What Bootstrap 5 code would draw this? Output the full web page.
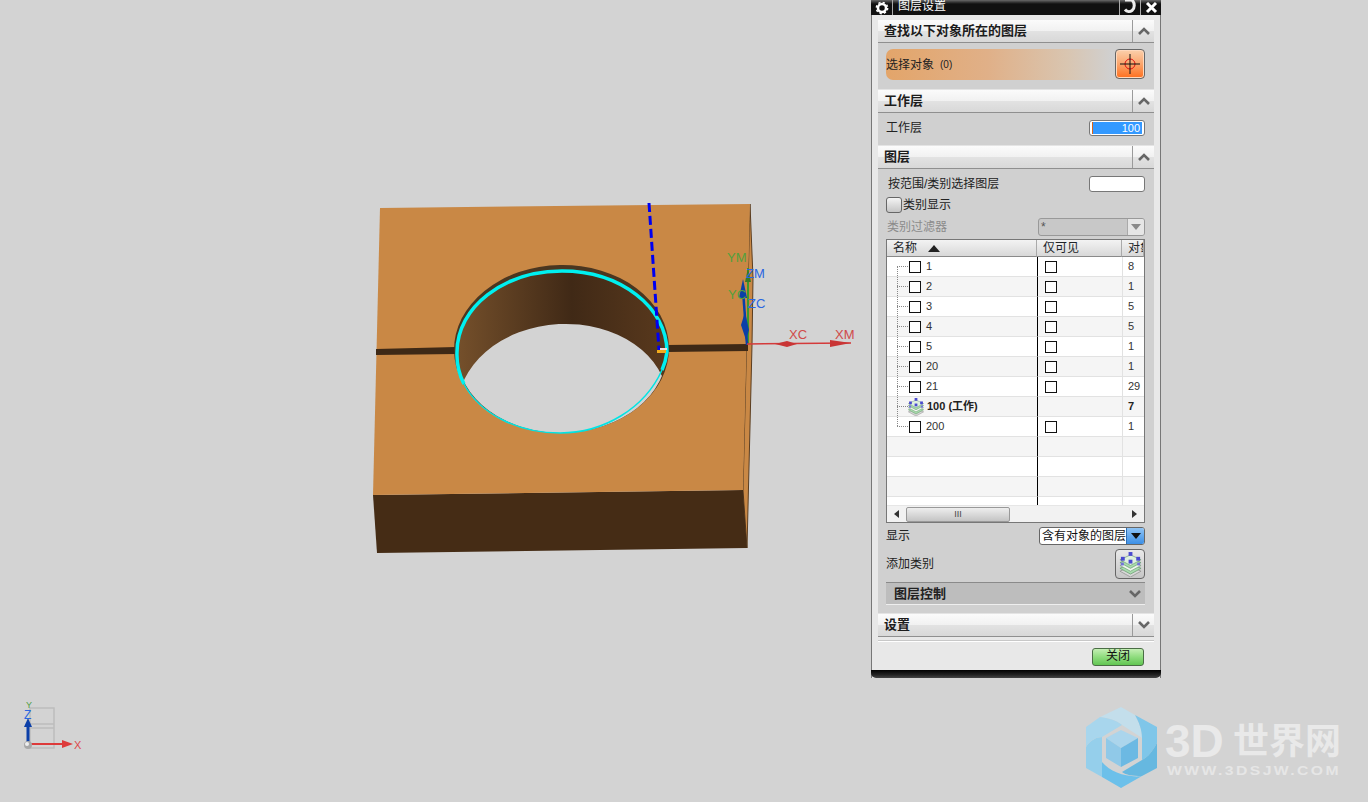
<!DOCTYPE html>
<html lang="zh-CN">
<head>
  <meta charset="UTF-8">
  <meta name="viewport" content="width=device-width, initial-scale=1.0">
  <title>图层设置</title>
  <link href="https://cdn.jsdelivr.net/npm/bootstrap@5.3.1/dist/css/bootstrap.min.css" rel="stylesheet">
  <style>
    body {
      background-color: #d3d3d3;
      font-family: "Liberation Sans", "Noto Sans CJK SC", sans-serif;
      font-size: 12px;
      color: #222;
      overflow: hidden;
    }
    .cad-canvas {
      position: relative;
      width: 1368px;
      height: 802px;
      overflow: hidden;
    }
    .scene {
      position: absolute;
      left: 0;
      top: 0;
    }
    .dlg {
      position: absolute;
      left: 871px;
      top: 0;
      width: 290px;
      height: 678px;
      line-height: 16px;
      background: #e8e8e8;
      border-left: 1px solid #777;
      border-right: 1px solid #777;
    }
    .dlg-title {
      height: 15px;
      margin: 0 -1px;
      background: linear-gradient(#6a6a6a 0, #3a3a3a 2px, #111 4px, #111 100%);
      color: #fff;
      overflow: hidden;
    }
    .dlg-title-text {
      line-height: 12px;
      font-size: 12px;
      padding-left: 5px;
    }
    .dlg-title-cell {
      width: 21px;
      height: 15px;
      border-left: 1px solid #aaa;
    }
    .dlg-gear {
      width: 22px;
      height: 15px;
      border-right: 1px solid #aaa;
    }
    .dlg-body {
      padding: 5px 6px 0 6px;
    }
    .sec-head {
      height: 23px;
      background: linear-gradient(#fbfbfb 0, #f1f1f1 50%, #e2e2e2 52%, #d8d8d8 100%);
      border-bottom: 1px solid #8f8f8f;
      font-weight: 700;
      font-size: 13px;
      padding-left: 6px;
      color: #1c1c1c;
    }
    .sec-head-btn {
      width: 22px;
      height: 22px;
      border-left: 1px solid #9a9a9a;
    }
    .sec-main {
      background: #d0d0d0;
      padding: 0 9px 0 8px;
      border-bottom: 1px solid #e4e4e4;
    }
    .sec-select { height: 47px; padding-top: 6px; }
    .sec-work { height: 33px; padding-top: 7px; }
    .sec-layers { height: 445px; padding-top: 7px; }
    .select-band {
      height: 31px;
      flex: 1;
      margin-right: 3px;
      border-radius: 7px 0 0 7px;
      background: linear-gradient(90deg, #e3a56a 0, #e0b088 45%, #d9c5b0 80%, #d0d0d0 100%);
    }
    .select-count {
      margin-left: 6px;
      font-size: 10px;
    }
    .cad-iconbtn {
      width: 30px;
      height: 30px;
      border: 1px solid #666;
      border-radius: 4px;
      padding: 0;
      background: linear-gradient(#e9e9e9, #c6c6c6);
    }
    .cad-iconbtn-hot {
      background: linear-gradient(#fbd0ac 0, #fba56c 50%, #ff6f1e 100%);
      box-shadow: inset 0 0 0 1px #ffd9bd;
    }
    .cad-field {
      width: 56px;
      height: 16px;
      background: #fff;
      border: 1px solid #777;
      border-radius: 3px;
    }
    .cad-field-sel {
      padding: 1px 2px;
      line-height: 12px;
      font-size: 11px;
      text-align: right;
      color: #fff;
    }
    .cad-field-sel span {
      display: block;
      background: #3399ff;
      border-left: 1px solid #d8641a;
      padding-right: 2px;
    }
    .range-label { padding-left: 2px; }
    .cad-check-big {
      width: 16px;
      height: 16px;
      border: 1px solid #666;
      border-radius: 3px;
      background: linear-gradient(#f4f4f4, #c4c4c4);
      margin-right: 1px;
    }
    .cad-combo {
      height: 18px;
      border: 1px solid #999;
      border-radius: 3px;
      line-height: 16px;
      padding-left: 2px;
      overflow: hidden;
    }
    .cad-combo-off {
      width: 107px;
      background: #c8c8c8;
      color: #555;
    }
    .cad-combo-on {
      width: 106px;
      background: #fff;
      border-color: #666;
      color: #111;
      white-space: nowrap;
    }
    .cad-combo-arrow {
      width: 17px;
      height: 16px;
      flex: none;
      background: #e6e6e6;
      border-left: 1px solid #aaa;
    }
    .cad-combo-on .cad-combo-arrow {
      width: 18px;
      background: linear-gradient(#8fc4f5, #3c8fe6);
      border-left: 1px solid #2f6fb5;
    }
    .txt-off { color: #8b8b8b; padding-left: 1px; }
    .row-gap5 { margin-top: 5px; }
    .row-gap3 { margin-top: 3px; }
    .row-gap4 { margin-top: 4px; }
    .grid-box {
      height: 284px;
      flex: none;
      background: #fff;
      border: 1px solid #777;
    }
    .grid-clip {
      height: 265px;
      overflow: hidden;
    }
    .table.layer-table {
      table-layout: fixed;
      border-collapse: separate;
      border-spacing: 0;
      width: 257px;
      font-size: 11px;
      line-height: 19px;
    }
    .table.layer-table th {
      height: 17px;
      padding: 0 0 0 6px;
      line-height: 16px;
      font-size: 12px;
      font-weight: 400;
      white-space: nowrap;
      overflow: hidden;
      background: linear-gradient(#f3f3f3, #d8d8d8);
      border-bottom: 1px solid #8a8a8a;
      border-right: 1px solid #aaa;
    }
    .table.layer-table th.head-vis { padding-left: 6px; }
    .table.layer-table td {
      height: 20px;
      padding: 0;
      vertical-align: middle;
      background: #fff;
      color: #333;
      border-bottom: 1px solid #e2e2e2;
      white-space: nowrap;
      overflow: hidden;
    }
    .table.layer-table tr.row-alt td { background: #f5f5f5; }
    .table.layer-table td.cell-vis {
      border-left: 1px solid #000;
      padding-left: 7px;
    }
    .table.layer-table td.cell-count {
      border-left: 1px solid #e2e2e2;
      padding-left: 5px;
    }
    .table.layer-table tr.row-work td { font-weight: 700; color: #222; }
    .tree-stub {
      flex: none;
      width: 12px;
      height: 19px;
      margin-left: 10px;
      background:
        repeating-linear-gradient(to right, #888 0 1px, transparent 1px 2px) 0 50% / 100% 1px no-repeat,
        repeating-linear-gradient(to bottom, #888 0 1px, transparent 1px 2px) 0 0 / 1px 100% no-repeat;
    }
    .tree-stub-first {
      background:
        repeating-linear-gradient(to right, #888 0 1px, transparent 1px 2px) 0 50% / 100% 1px no-repeat,
        repeating-linear-gradient(to bottom, #888 0 1px, transparent 1px 2px) 0 100% / 1px 50% no-repeat;
    }
    .tree-stub-last {
      background:
        repeating-linear-gradient(to right, #888 0 1px, transparent 1px 2px) 0 50% / 100% 1px no-repeat,
        repeating-linear-gradient(to bottom, #888 0 1px, transparent 1px 2px) 0 0 / 1px 50% no-repeat;
    }
    .cad-box {
      display: block;
      flex: none;
      width: 12px;
      height: 12px;
      border: 1px solid #111;
      background: #fff;
    }
    .name-gap { margin-left: 5px; }
    .row-icon {
      flex: none;
      margin-left: -2px;
    }
    .row-work .name-gap { margin-left: 2px; }
    .grid-scroll {
      height: 17px;
      background: #f2f2f2;
      padding: 0 7px;
      border-top: 1px solid #e6e6e6;
    }
    .grid-thumb {
      width: 104px;
      height: 15px;
      margin-left: 7px;
      border: 1px solid #999;
      border-radius: 2px;
      background: linear-gradient(#eee, #c4c4c4);
      text-align: center;
      font-size: 9px;
      line-height: 13px;
      color: #444;
    }
    .sub-head {
      height: 23px;
      flex: none;
      background: #bdbdbd;
      border-top: 1px solid #8a8a8a;
      border-bottom: 1px solid #eee;
      font-weight: 700;
      font-size: 13px;
      padding: 0 3px 0 8px;
    }
    .dlg-sep {
      margin-top: 3px;
      border-top: 1px solid #c8c8c8;
      border-bottom: 1px solid #fff;
    }
    .dlg-foot {
      height: 29px;
      padding-right: 10px;
    }
    .btn.cad-close {
      width: 52px;
      height: 18px;
      padding: 0;
      line-height: 15px;
      font-size: 12px;
      color: #111;
      border: 1px solid #4a6d45;
      border-radius: 3px;
      background: linear-gradient(#c4efb4 0, #8fdc7e 50%, #62c653 100%);
    }
    .dlg-end {
      position: absolute;
      left: -1px;
      right: -1px;
      bottom: 0;
      height: 8px;
      background: linear-gradient(#000 0, #222 60%, #444 100%);
      border-radius: 0 0 5px 5px;
    }
  </style>
</head>
<body>
  <div class="cad-canvas">
    <svg class="scene" width="1368" height="802" viewBox="0 0 1368 802" font-family="Liberation Sans, sans-serif">
      <defs>
        <clipPath id="holeClip"><ellipse cx="562" cy="352" rx="105" ry="81" transform="rotate(-1 562 352)"/></clipPath>
        <linearGradient id="wall" x1="0" x2="1" y1="0" y2="0">
          <stop offset="0" stop-color="#75502b"/>
          <stop offset="0.55" stop-color="#402916"/>
          <stop offset="1" stop-color="#59391d"/>
        </linearGradient>
        <symbol id="layersIcon" viewBox="0 0 24 26">
          <path d="M12 15 23 20 12 26 1 20Z" fill="#d8d8d8" stroke="#8a8a8a" stroke-width=".7"/>
          <path d="M12 12 23 17 12 23 1 17Z" fill="#a9dcae" stroke="#5f9466" stroke-width=".7"/>
          <path d="M12 9 23 14 12 20 1 14Z" fill="#f0f7f0" stroke="#6f9c74" stroke-width=".7"/>
          <path d="M12 6 23 11 12 17 1 11Z" fill="#a9dcae" stroke="#5f9466" stroke-width=".7"/>
          <path d="M12 3 23 8 12 14 1 8Z" fill="#dff1df" stroke="#6f9c74" stroke-width=".7"/>
          <g fill="#4a4ad0">
            <rect x="10" y="0" width="4" height="4"/>
            <rect x="2" y="5" width="4" height="4"/>
            <rect x="18" y="5" width="4" height="4"/>
            <rect x="10" y="8" width="4" height="4"/>
            <rect x="2" y="11" width="3" height="3" fill="#7474d8"/>
            <rect x="19" y="11" width="3" height="3" fill="#7474d8"/>
          </g>
        </symbol>
      </defs>

      <!-- block -->
      <path d="M750 204 753 278 752 345 747 548 743 490Z" fill="#c98845" stroke="#5a3d20" stroke-width="1"/>
      <path d="M373 495 743 490 747 548 377 553Z" fill="#452c15"/>
      <path d="M380 208 750 204 743 490 373 495Z" fill="#c98845"/>
      <path d="M376 349 456 347 456 354 376 355Z" fill="#3e2916"/>
      <path d="M667 345 748 344 748 351 667 352Z" fill="#3e2916"/>

      <!-- hole -->
      <ellipse cx="561.5" cy="349" rx="107.5" ry="84" fill="#4a3620" transform="rotate(-1 561 349)"/>
      <ellipse cx="562" cy="352" rx="105" ry="81" fill="url(#wall)" transform="rotate(-1 562 352)"/>
      <g clip-path="url(#holeClip)">
        <ellipse cx="563" cy="405" rx="105" ry="81" fill="#d3d3d3" transform="rotate(-3 563 405)"/>
      </g>
      <path d="M464 384A105 81 0 0 1 457 352C457 307 504 271 562 271 620 271 667 307 667 352A105 81 0 0 1 662 370" fill="none" stroke="#00f0f0" stroke-width="3.500"/>
      <path d="M464 384C480 414 518 433 560 433 604 433 645 408 662 370" fill="none" stroke="#00e4e4" stroke-width="1.500"/>

      <!-- dashed datum -->
      <path d="M649 203 659 350" stroke="#0000f0" stroke-width="3" stroke-dasharray="9 4" fill="none"/>
      <rect x="657" y="350" width="9" height="3" fill="#f2ac1c"/>
      <rect x="660" y="348" width="7" height="2" fill="#f4dfe0"/>

      <!-- work coordinate axes -->
      <path d="M748 344 748 268" stroke="#3d9a2c" stroke-width="2"/>
      <path d="M745 282 748 268 751 282Z" fill="#3a7a25"/>
      <path d="M747 345 743 290" stroke="#0b3fa8" stroke-width="2.500"/>
      <path d="M739 298 743 279 747 298Z" fill="#0b3fa8"/>
      <path d="M741 325 745 312 749 330 746 340Z" fill="#0b3fa8"/>
      <path d="M747 344 851 343" stroke="#d43a3a" stroke-width="1.500"/>
      <path d="M775 344 787 341 797 344 787 347Z" fill="#c93535"/>
      <path d="M830 340 851 343 830 347Z" fill="#c93535"/>
      <g font-size="13">
        <text x="789" y="339" fill="#d04a4a">XC</text>
        <text x="835" y="339" fill="#d04a4a">XM</text>
        <text x="727" y="262" fill="#52a03c">YM</text>
        <text x="728" y="299" fill="#52a03c">YC</text>
        <text x="746" y="278" fill="#2a66e0">ZM</text>
        <text x="748" y="308" fill="#2a66e0">ZC</text>
      </g>

      <!-- view triad -->
      <g fill="none" stroke="#bdbdbd" stroke-width="1.500">
        <path d="M30 708H54V748H30Z"/>
        <path d="M30 724H54M30 728H54"/>
      </g>
      <path d="M28 745V725" stroke="#0b3fa8" stroke-width="3"/>
      <path d="M24 727 28 718 32 727Z" fill="#0b3fa8"/>
      <path d="M30 744H62" stroke="#dd3a3a" stroke-width="2"/>
      <path d="M62 740 73 744 62 748Z" fill="#dd3a3a"/>
      <circle cx="28" cy="745" r="4" fill="#a8a8a8"/>
      <circle cx="27" cy="744" r="2" fill="#eee"/>
      <text x="74" y="749" font-size="11" fill="#dd4a4a">X</text>
      <text x="26" y="708" font-size="9" fill="#4f9f45">Y</text>
      <text x="24" y="719" font-size="12" fill="#2a66e0">Z</text>

      <!-- watermark -->
      <path d="M1100 717 1121 707 1135 715C1139 722 1142 730 1142 738L1122 725C1116 720 1108 718 1100 717Z" fill="#c3deeb"/>
      <path d="M1135 715 1157 727V743C1152 752 1148 757 1142 760V738C1142 730 1139 722 1135 715Z" fill="#7fc6e9"/>
      <path d="M1157 743V768L1142 776C1132 776 1126 775 1122 772L1142 760C1148 757 1152 752 1157 743Z" fill="#66b8e0"/>
      <path d="M1102 762C1110 772 1128 778 1142 776L1121 788 1102 777Z" fill="#6cc0ea"/>
      <path d="M1086 747C1090 740 1097 737 1102 737V777L1086 768Z" fill="#95cfeb"/>
      <path d="M1086 727 1100 717C1108 718 1116 720 1122 725L1102 737C1097 737 1090 740 1086 747Z" fill="#a8d6ed"/>
      <path d="M1121 730 1138 738 1121 748 1106 738Z" fill="#abd5ec"/>
      <path d="M1106 738 1121 748V767L1106 758Z" fill="#90c9e8"/>
      <path d="M1138 738 1121 748V767L1138 758Z" fill="#6cb9e3"/>
      <text x="1165" y="757" font-size="46" font-weight="700" fill="#e9e9e9">3D</text>
      <text x="1233" y="754" font-size="36" font-weight="700" fill="#e9e9e9" font-family="Noto Sans CJK SC, sans-serif">世界网</text>
      <text x="1167" y="775" font-size="13" font-weight="700" fill="#e6e6e6" letter-spacing="2" textLength="174" lengthAdjust="spacingAndGlyphs">WWW.3DSJW.COM</text>
    </svg>

    <div class="dlg">
      <div class="dlg-title d-flex">
        <div class="dlg-gear d-flex align-items-center justify-content-center">
          <svg width="14" height="14" viewBox="0 0 14 14"><circle cx="7" cy="7" r="4" fill="none" stroke="#fff" stroke-width="2.500"/><circle cx="7" cy="7" r="5.600" fill="none" stroke="#fff" stroke-width="1.600" stroke-dasharray="2.200 2.200"/></svg>
        </div>
        <div class="dlg-title-text flex-grow-1">图层设置</div>
        <div class="dlg-title-cell d-flex align-items-start justify-content-center">
          <svg width="14" height="15" viewBox="0 0 14 15"><path d="M2 0H9C12 3 12 8 9 10.500 7 12 4 12 2 9.500" fill="none" stroke="#eee" stroke-width="3"/></svg>
        </div>
        <div class="dlg-title-cell d-flex align-items-center justify-content-center">
          <svg width="13" height="13" viewBox="0 0 13 13"><path d="M2 2 11 11M11 2 2 11" stroke="#fff" stroke-width="3"/></svg>
        </div>
      </div>

      <div class="dlg-body">
        <div class="sec-head d-flex align-items-center justify-content-between">
          <span>查找以下对象所在的图层</span>
          <span class="sec-head-btn d-flex align-items-center justify-content-center"><svg width="14" height="10" viewBox="0 0 14 10"><path d="M2 8 7 3 12 8" fill="none" stroke="#666" stroke-width="2.600"/></svg></span>
        </div>
        <div class="sec-main sec-select d-flex align-items-start">
          <div class="select-band d-flex align-items-center">选择对象<span class="select-count">(0)</span></div>
          <button type="button" class="btn cad-iconbtn cad-iconbtn-hot d-flex align-items-center justify-content-center">
            <svg width="20" height="20" viewBox="0 0 20 20"><circle cx="10" cy="10" r="5" fill="none" stroke="#e01010" stroke-width="1"/><path d="M0 10H20M10 0V20" stroke="#111" stroke-width="1"/></svg>
          </button>
        </div>

        <div class="sec-head d-flex align-items-center justify-content-between">
          <span>工作层</span>
          <span class="sec-head-btn d-flex align-items-center justify-content-center"><svg width="14" height="10" viewBox="0 0 14 10"><path d="M2 8 7 3 12 8" fill="none" stroke="#666" stroke-width="2.600"/></svg></span>
        </div>
        <div class="sec-main sec-work d-flex justify-content-between align-items-start">
          <span>工作层</span>
          <div class="cad-field cad-field-sel"><span>100</span></div>
        </div>

        <div class="sec-head d-flex align-items-center justify-content-between">
          <span>图层</span>
          <span class="sec-head-btn d-flex align-items-center justify-content-center"><svg width="14" height="10" viewBox="0 0 14 10"><path d="M2 8 7 3 12 8" fill="none" stroke="#666" stroke-width="2.600"/></svg></span>
        </div>
        <div class="sec-main sec-layers d-flex flex-column">
          <div class="d-flex justify-content-between align-items-center">
            <span class="range-label">按范围/类别选择图层</span>
            <div class="cad-field"></div>
          </div>
          <div class="d-flex align-items-center row-gap5">
            <span class="cad-check-big"></span><span>类别显示</span>
          </div>
          <div class="d-flex justify-content-between align-items-center row-gap5">
            <span class="txt-off">类别过滤器</span>
            <div class="cad-combo cad-combo-off d-flex justify-content-between">
              <span>*</span>
              <span class="cad-combo-arrow d-flex align-items-center justify-content-center"><svg width="12" height="8" viewBox="0 0 12 8"><path d="M1 1H11L6 7Z" fill="#8a8a8a"/></svg></span>
            </div>
          </div>

          <div class="grid-box row-gap3">
            <div class="grid-clip">
              <table class="table table-borderless mb-0 layer-table">
                <colgroup><col style="width:150px"><col style="width:85px"><col style="width:22px"></colgroup>
                <thead>
                  <tr>
                    <th>名称 <svg class="ms-2" width="12" height="7" viewBox="0 0 12 7"><path d="M6 0 12 7H0Z" fill="#222"/></svg></th>
                    <th class="head-vis">仅可见</th>
                    <th>对象数</th>
                  </tr>
                </thead>
                <tbody>
                  <tr><td><div class="d-flex align-items-center"><span class="tree-stub tree-stub-first"></span><span class="cad-box"></span><span class="name-gap">1</span></div></td><td class="cell-vis"><span class="cad-box"></span></td><td class="cell-count">8</td></tr>
                  <tr class="row-alt"><td><div class="d-flex align-items-center"><span class="tree-stub"></span><span class="cad-box"></span><span class="name-gap">2</span></div></td><td class="cell-vis"><span class="cad-box"></span></td><td class="cell-count">1</td></tr>
                  <tr><td><div class="d-flex align-items-center"><span class="tree-stub"></span><span class="cad-box"></span><span class="name-gap">3</span></div></td><td class="cell-vis"><span class="cad-box"></span></td><td class="cell-count">5</td></tr>
                  <tr class="row-alt"><td><div class="d-flex align-items-center"><span class="tree-stub"></span><span class="cad-box"></span><span class="name-gap">4</span></div></td><td class="cell-vis"><span class="cad-box"></span></td><td class="cell-count">5</td></tr>
                  <tr><td><div class="d-flex align-items-center"><span class="tree-stub"></span><span class="cad-box"></span><span class="name-gap">5</span></div></td><td class="cell-vis"><span class="cad-box"></span></td><td class="cell-count">1</td></tr>
                  <tr class="row-alt"><td><div class="d-flex align-items-center"><span class="tree-stub"></span><span class="cad-box"></span><span class="name-gap">20</span></div></td><td class="cell-vis"><span class="cad-box"></span></td><td class="cell-count">1</td></tr>
                  <tr><td><div class="d-flex align-items-center"><span class="tree-stub"></span><span class="cad-box"></span><span class="name-gap">21</span></div></td><td class="cell-vis"><span class="cad-box"></span></td><td class="cell-count">29</td></tr>
                  <tr class="row-alt row-work"><td><div class="d-flex align-items-center"><span class="tree-stub"></span><svg width="18" height="18" viewBox="0 0 24 26" class="row-icon"><use href="#layersIcon"/></svg><span class="name-gap">100 (工作)</span></div></td><td class="cell-vis"></td><td class="cell-count">7</td></tr>
                  <tr><td><div class="d-flex align-items-center"><span class="tree-stub tree-stub-last"></span><span class="cad-box"></span><span class="name-gap">200</span></div></td><td class="cell-vis"><span class="cad-box"></span></td><td class="cell-count">1</td></tr>
                  <tr class="row-alt"><td>&nbsp;</td><td class="cell-vis"></td><td class="cell-count"></td></tr>
                  <tr><td>&nbsp;</td><td class="cell-vis"></td><td class="cell-count"></td></tr>
                  <tr class="row-alt"><td>&nbsp;</td><td class="cell-vis"></td><td class="cell-count"></td></tr>
                  <tr><td>&nbsp;</td><td class="cell-vis"></td><td class="cell-count"></td></tr>
                </tbody>
              </table>
            </div>
            <div class="grid-scroll d-flex align-items-center justify-content-between">
              <div class="d-flex align-items-center">
                <svg width="5" height="8" viewBox="0 0 5 8"><path d="M5 0V8L0 4Z" fill="#333"/></svg>
                <div class="grid-thumb">III</div>
              </div>
              <svg width="5" height="8" viewBox="0 0 5 8"><path d="M0 0V8L5 4Z" fill="#333"/></svg>
            </div>
          </div>

          <div class="d-flex justify-content-between align-items-center row-gap4">
            <span>显示</span>
            <div class="cad-combo cad-combo-on d-flex justify-content-between">
              <span>含有对象的图层</span>
              <span class="cad-combo-arrow d-flex align-items-center justify-content-center"><svg width="12" height="8" viewBox="0 0 12 8"><path d="M1 1H11L6 7Z" fill="#111"/></svg></span>
            </div>
          </div>
          <div class="d-flex justify-content-between align-items-center row-gap4">
            <span>添加类别</span>
            <button type="button" class="btn cad-iconbtn d-flex align-items-center justify-content-center">
              <svg width="23" height="25" viewBox="0 0 24 26"><use href="#layersIcon"/></svg>
            </button>
          </div>
          <div class="sub-head d-flex align-items-center justify-content-between row-gap3">
            <span>图层控制</span>
            <svg width="14" height="10" viewBox="0 0 14 10"><path d="M2 2 7 7 12 2" fill="none" stroke="#666" stroke-width="2.600"/></svg>
          </div>
        </div>

        <div class="sec-head d-flex align-items-center justify-content-between">
          <span>设置</span>
          <span class="sec-head-btn d-flex align-items-center justify-content-center"><svg width="14" height="10" viewBox="0 0 14 10"><path d="M2 2 7 7 12 2" fill="none" stroke="#666" stroke-width="2.600"/></svg></span>
        </div>
        <div class="dlg-sep"></div>
        <div class="dlg-foot d-flex justify-content-end align-items-center">
          <button type="button" class="btn cad-close">关闭</button>
        </div>
      </div>
      <div class="dlg-end"></div>
    </div>
  </div>

  <script src="https://cdn.jsdelivr.net/npm/bootstrap@5.3.1/dist/js/bootstrap.bundle.min.js"></script>
</body>
</html>
